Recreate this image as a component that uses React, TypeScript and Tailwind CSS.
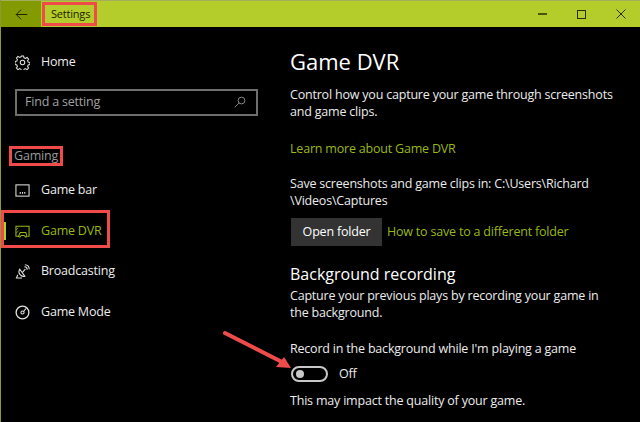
const GREEN = 'text-[#9ab813]';

function NavIcon({ name, active }: { name: string; active?: boolean }) {
  const cls = active ? 'text-[#9ab813]' : 'text-[#e4e4e4]';
  return (
    <svg viewBox="0 0 16 16" className={`w-[15px] h-[15px] ${cls}`} fill="none" stroke="currentColor" strokeWidth="1.1">
      {name === 'home' && (
        <>
          <circle cx="8" cy="8" r="2.4" />
          <path d="M6.800 1h2.400l.4 2 1.500.7 1.800-1.100 1.600 1.700-1.100 1.700.7 1.600 1.900.4v2.200l-1.900.4-.7 1.600 1.100 1.700-1.600 1.700-1.800-1.100-1.500.7-.4 1.800H6.800l-.4-1.800-1.500-.7-1.800 1.100-1.600-1.700 1.100-1.700-.7-1.600-1.900-.4V6.900l1.900-.4.7-1.600-1.100-1.700 1.600-1.700 1.800 1.100 1.500-.7z" />
        </>
      )}
      {name === 'bar' && (
        <>
          <rect x="1" y="2" width="14" height="12" />
          <path d="M5 10.500h1.200M7.400 10.500h1.200M9.800 10.500h1.200" strokeWidth="2" />
        </>
      )}
      {name === 'dvr' && (
        <>
          <path d="M4 13H1V2.500h14V13h-1.500" />
          <path d="M1 10l3-3M1 6.500l2.500-2.500" strokeWidth="0.8" />
          <path d="M5.500 9h6l1.300 4.300-1.500.7-1.500-1.800H6.700L5.200 14l-1.500-.7z" />
        </>
      )}
      {name === 'cast' && (
        <>
          <path d="M5 5.500a5 5 0 0 0 5.500 7.500z" />
          <path d="M8 9l3-3.500M3 11.500L1.500 15h6" />
          <path d="M10 3a3 3 0 0 1 3 3M10.500.8A5 5 0 0 1 15.200 5.500" />
        </>
      )}
      {name === 'mode' && (
        <>
          <circle cx="8" cy="8" r="6.800" strokeWidth="1.400" />
          <circle cx="8" cy="8" r="1.700" />
          <path d="M9.200 6.800L12 3.500" />
        </>
      )}
    </svg>
  );
}

function NavRow({ icon, label, active }: { icon: string; label: string; active?: boolean }) {
  return (
    <div className={`h-[40.500px] flex items-center gap-[11px] pl-[14px] ${active ? 'text-[#9ab813]' : 'text-[#ececec]'}`}>
      <NavIcon name={icon} active={active} />
      <span>{label}</span>
    </div>
  );
}

export default function App() {
  return (
    <div className="relative w-[640px] h-[422px] overflow-hidden bg-black text-[12.500px] tracking-[-0.2px] text-[#ececec] border-l border-[#8a9a3a] font-['Open_Sans','Noto_Sans',sans-serif]">
      {/* title bar */}
      <div className="h-[27px] flex items-center bg-[#b4cd2a] border-t border-[#a3ad5c] text-[#1c2200]">
        <div className="w-[40px] h-full flex items-center justify-center bg-[#839a00]">
          <svg viewBox="0 0 16 16" className="w-[13px] h-[13px]" fill="none" stroke="currentColor" strokeWidth="1.200">
            <path d="M15 8H1.500M7.500 2L1.500 8l6 6" />
          </svg>
        </div>
        <span className="ml-[10px] text-[11px]">Settings</span>
        <div className="ml-auto flex items-center">
          <div className="w-[39px] flex justify-center">
            <div className="w-[9px] border-t-2 border-[#4a5510]" />
          </div>
          <div className="w-[39px] flex justify-center">
            <div className="w-[9px] h-[9px] border border-[#2a3005]" />
          </div>
          <div className="w-[39px] flex justify-center">
            <svg viewBox="0 0 10 10" className="w-[10px] h-[10px] text-[#2a3005]" fill="none" stroke="currentColor" strokeWidth="1">
              <path d="M0.500 0.500l9 9M9.500 0.500l-9 9" />
            </svg>
          </div>
        </div>
      </div>

      <div className="flex">
        {/* sidebar */}
        <aside className="w-[289px] shrink-0">
          <div className="mt-[15px]">
            <NavRow icon="home" label="Home" />
          </div>
          <div className="ml-[14px] mt-[6px] w-[243px] h-[27px] border-2 border-[#6e6e6e] flex items-center justify-between pl-[8px] pr-[10px] text-[#a0a0a0]">
            <span>Find a setting</span>
            <svg viewBox="0 0 16 16" className="w-[12px] h-[12px]" fill="none" stroke="currentColor" strokeWidth="1.100">
              <circle cx="10" cy="6" r="4.500" />
              <path d="M6.800 9.200L1 15" />
            </svg>
          </div>
          <div className="mt-[30px] pl-[13px] text-[#9a9a9a] leading-[20px]">Gaming</div>
          <div className="mt-[5px]">
            <NavRow icon="bar" label="Game bar" />
            <div className="relative">
              <div className="absolute left-[3px] top-[11px] w-[2px] h-[18px] bg-[#b4cd2a]" />
              <NavRow icon="dvr" label="Game DVR" active />
            </div>
            <NavRow icon="cast" label="Broadcasting" />
            <NavRow icon="mode" label="Game Mode" />
          </div>
        </aside>

        {/* content */}
        <main className="flex-1 min-w-0">
          <h1 className="mt-[18px] text-[22px] tracking-normal leading-[32px] text-white">Game DVR</h1>
          <p className="mt-[9px] leading-[17px]">
            Control how you capture your game through screenshots
            <br />
            and game clips.
          </p>
          <p className={`mt-[20px] leading-[18px] ${GREEN}`}>Learn more about Game DVR</p>
          <p className="mt-[17px] leading-[17px]">
            Save screenshots and game clips in: C:\Users\Richard
            <br />
            \Videos\Captures
          </p>
          <div className="mt-[9px] flex items-center gap-[5px] ml-px">
            <div className="w-[91px] h-[28px] bg-[#333333] flex items-center justify-center text-white">Open folder</div>
            <span className={GREEN}>How to save to a different folder</span>
          </div>
          <h2 className="mt-[16px] text-[16px] tracking-normal leading-[24px] text-white">Background recording</h2>
          <p className="mt-px leading-[17px]">
            Capture your previous plays by recording your game in
            <br />
            the background.
          </p>
          <p className="mt-[19px] leading-[18px]">Record in the background while I'm playing a game</p>
          <div className="mt-[7px] flex items-center gap-[11px] ml-px">
            <div className="w-[37px] h-[16px] rounded-full border-2 border-[#c8c8c8] flex items-center pl-[3px]">
              <div className="w-[8px] h-[8px] rounded-full bg-[#c8c8c8]" />
            </div>
            <span>Off</span>
          </div>
          <p className="mt-[8px] leading-[18px]">This may impact the quality of your game.</p>
        </main>
      </div>

      {/* annotations */}
      <div className="absolute left-[41px] top-[2px] w-[55px] h-[24px] border-[3px] border-[#ef4b4b]" />
      <div className="absolute left-[8px] top-[146px] w-[54px] h-[20px] border-[3px] border-[#ef4b4b]" />
      <div className="absolute left-0 top-[210px] w-[109px] h-[38px] border-[3px] border-[#ef4b4b]" />
      <svg className="absolute left-[221px] top-[331px] w-[72px] h-[40px]" viewBox="0 0 72 40">
        <path d="M3 2L60 31" stroke="#ef4b4b" strokeWidth="4" strokeLinecap="round" />
        <path d="M62 26L69 37 54 36z" fill="#ef4b4b" />
      </svg>
    </div>
  );
}
